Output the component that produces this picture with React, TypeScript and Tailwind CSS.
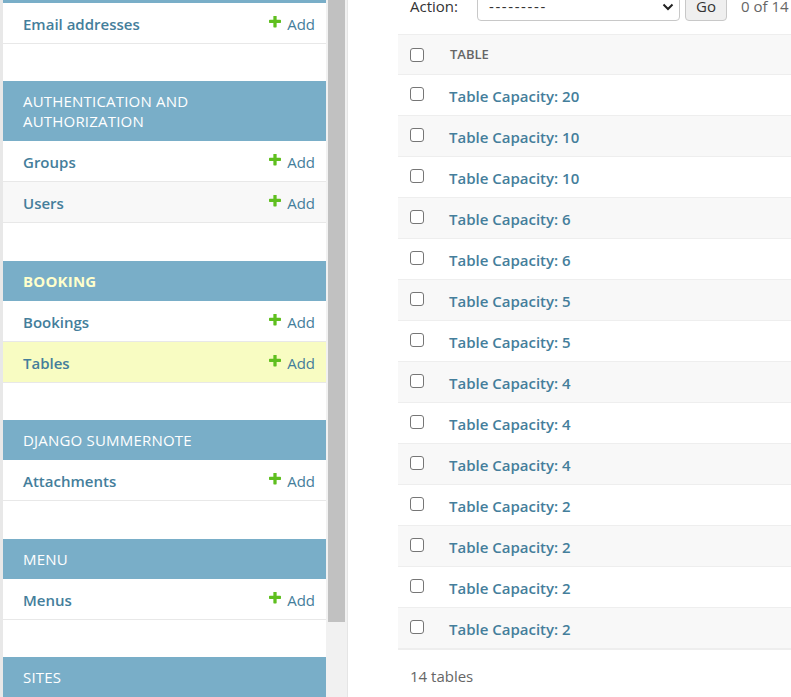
import React from "react";

const PlusIcon = () => (
  <svg width="12" height="12" viewBox="192 192 1408 1408" className="mb-[5px] shrink-0">
    <path
      fill="#5fbf1f"
      d="M1600 736v192q0 40-28 68t-68 28h-416v416q0 40-28 68t-68 28h-192q-40 0-68-28t-28-68v-416h-416q-40 0-68-28t-28-68v-192q0-40 28-68t68-28h416v-416q0-40 28-68t68-28h192q40 0 68 28t28 68v416h416q40 0 68 28t28 68z"
    />
  </svg>
);

type RowProps = { name: string; alt?: boolean; selected?: boolean };

const SideRow = ({ name, alt, selected }: RowProps) => (
  <div
    className={
      "flex h-[41px] items-center justify-between border-b border-[#e8e8e8] pl-[20px] pr-[11px] " +
      (selected ? "bg-[#f8fcc2]" : alt ? "bg-[#f8f8f8]" : "bg-white")
    }
  >
    <span className="pt-[2px] text-[15px] font-semibold text-[#447e9b]">{name}</span>
    <span className="flex items-center gap-[6px] pt-[2px] text-[15px] text-[#447e9b]">
      <PlusIcon />
      Add
    </span>
  </div>
);

type ModuleProps = {
  caption: React.ReactNode;
  current?: boolean;
  rows: { name: string; selected?: boolean }[];
  mb: string;
};

const Module = ({ caption, current, rows, mb }: ModuleProps) => (
  <div className={mb}>
    <div
      className={
        "bg-[#79aec8] px-[20px] py-[10px] text-[15px] leading-[20px] uppercase tracking-[0.2px] " +
        (current ? "font-bold text-[#ffffcc]" : "text-white")
      }
    >
      {caption}
    </div>
    {rows.map((r, i) => (
      <SideRow key={r.name} name={r.name} alt={i % 2 === 1} selected={r.selected} />
    ))}
  </div>
);

const Checkbox = ({ className = "" }: { className?: string }) => (
  <div className={"h-[14px] w-[14px] shrink-0 rounded-[3px] border border-[#767676] bg-white " + className} />
);

const capacities = [20, 10, 10, 6, 6, 5, 5, 4, 4, 4, 2, 2, 2, 2];

export default function App() {
  return (
    <div className="flex h-[697px] w-[791px] overflow-hidden bg-white font-['Open_Sans',sans-serif]">
      {/* Sidebar */}
      <aside className="w-[326px] shrink-0 border-l-[3px] border-[#e8e8e8]">
        <div className="h-[3px] bg-[#79aec8]" />
        <div className="mb-[37px]">
          <SideRow name="Email addresses" />
        </div>
        <Module
          caption={
            <>
              Authentication and
              <br />
              Authorization
            </>
          }
          rows={[{ name: "Groups" }, { name: "Users" }]}
          mb="mb-[38px]"
        />
        <Module
          caption="Booking"
          current
          rows={[{ name: "Bookings" }, { name: "Tables", selected: true }]}
          mb="mb-[37px]"
        />
        <Module caption="Django Summernote" rows={[{ name: "Attachments" }]} mb="mb-[38px]" />
        <Module caption="Menu" rows={[{ name: "Menus" }]} mb="mb-[37px]" />
        <Module caption="Sites" rows={[]} mb="mb-0" />
      </aside>

      {/* Scrollbar */}
      <div className="w-[22px] shrink-0 border-r border-[#e5e5e5] bg-[#f1f1f1] px-[2px]">
        <div className="h-[622px] bg-[#c1c1c1]" />
      </div>

      {/* Main */}
      <main className="min-w-0 flex-1 overflow-hidden pl-[50px]">
        <div className="w-[640px]">
          <div className="-mt-[8px] flex h-[29px] items-center pl-[12px] text-[15px] text-[#333]">
            <span className="mr-[19px]">Action:</span>
            <div className="flex h-[28px] w-[203px] items-center justify-between rounded-[4px] border border-[#c8c8c8] bg-white pl-[11px] pr-[4px]">
              <span className="tracking-[1.6px] text-[#333]">---------</span>
              <svg width="12" height="8" viewBox="0 0 12 8" className="mr-[1px]">
                <polyline points="1.5,1.5 6,6 10.5,1.5" fill="none" stroke="#222" strokeWidth="2" />
              </svg>
            </div>
            <div className="ml-[5px] flex h-[29px] w-[42px] items-center justify-center rounded-[4px] border border-[#c8c8c8] bg-[#efefef] text-[#333]">
              Go
            </div>
            <span className="ml-[14px] whitespace-nowrap text-[#666]">0 of 14 selected</span>
          </div>

          <div className="mt-[13px] border-y border-[#eee]">
            <div className="flex h-[40px] items-center border-b border-[#eee] bg-[#f8f8f8] pl-[12px]">
              <Checkbox />
              <span className="ml-[26px] text-[13px] font-semibold uppercase text-[#666]">Table</span>
            </div>
            {capacities.map((c, i) => (
              <div
                key={i}
                className={
                  "flex h-[41px] items-center border-b border-[#eee] pl-[12px] " +
                  (i % 2 === 1 ? "bg-[#f8f8f8]" : "bg-white")
                }
              >
                <Checkbox className="mb-[3px]" />
                <span className="ml-[25px] pt-[2px] text-[15px] font-semibold text-[#447e9b]">
                  Table Capacity: {c}
                </span>
              </div>
            ))}
          </div>

          <div className="pl-[12px] pt-[16px] text-[15px] leading-[20px] text-[#666]">14 tables</div>
        </div>
      </main>
    </div>
  );
}
